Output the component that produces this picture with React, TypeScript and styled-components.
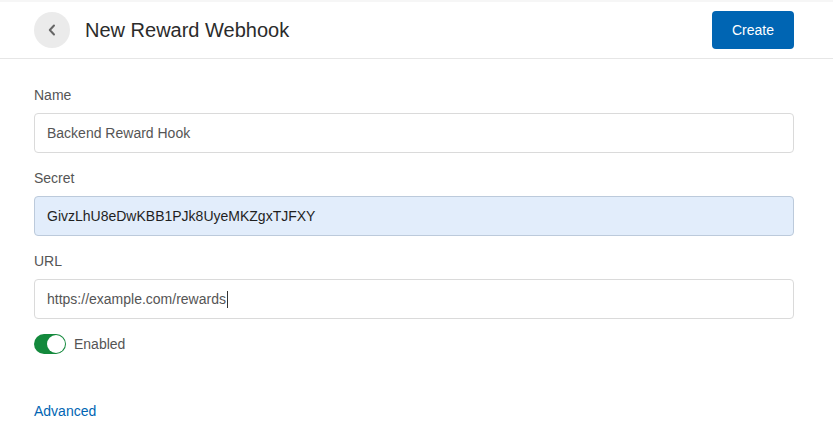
import React from "react";
import styled, { createGlobalStyle } from "styled-components";

const Global = createGlobalStyle`
  html, body { margin: 0; padding: 0; background: #fff; }
  body { font-family: "Liberation Sans", Arial, Helvetica, sans-serif; }
  * { box-sizing: border-box; }
`;

const Page = styled.div`
  width: 833px;
  min-height: 441px;
  background: #fff;
  border-top: 2px solid #f6f6f6;
`;

const Header = styled.header`
  height: 57px;
  display: flex;
  align-items: center;
  justify-content: space-between;
  padding: 0 39px 0 34px;
  border-bottom: 1px solid #e6e6e6;
`;

const TitleGroup = styled.div`
  display: flex;
  align-items: center;
  gap: 15px;
`;

const BackButton = styled.button`
  width: 36px;
  height: 36px;
  border-radius: 50%;
  border: none;
  background: #ebebeb;
  display: flex;
  align-items: center;
  justify-content: center;
  padding: 0;
`;

const Title = styled.h1`
  margin: 0;
  font-size: 20px;
  font-weight: 400;
  color: #2b2b2b;
`;

const PrimaryButton = styled.button`
  width: 82px;
  height: 38px;
  border: none;
  border-radius: 4px;
  background: #0065b3;
  color: #fff;
  font-family: inherit;
  font-size: 14px;
`;

const Form = styled.div`
  padding: 28px 39px 0 34px;
  display: flex;
  flex-direction: column;
`;

const Field = styled.div`
  display: flex;
  flex-direction: column;
  margin-bottom: 17px;
`;

const Label = styled.label`
  font-size: 14px;
  color: #555;
  line-height: 16px;
  margin-bottom: 10px;
`;

const Input = styled.div<{ $filled?: boolean }>`
  height: 40px;
  border-radius: 4px;
  border: 1px solid ${(p) => (p.$filled ? "#bccadb" : "#dadada")};
  background: ${(p) => (p.$filled ? "#e2edfb" : "#fff")};
  color: ${(p) => (p.$filled ? "#1f1f1f" : "#555")};
  font-size: 14px;
  display: flex;
  align-items: center;
  padding: 0 12px;
`;

const Caret = styled.span`
  display: inline-block;
  width: 1px;
  height: 17px;
  background: #333;
  margin-left: 1px;
`;

const ToggleRow = styled.div`
  display: flex;
  align-items: center;
  gap: 8px;
  margin-top: -2px;
`;

const Track = styled.span`
  width: 32px;
  height: 20px;
  border-radius: 10px;
  background: #13893c;
  position: relative;
  display: inline-block;
`;

const Knob = styled.span`
  position: absolute;
  right: 1px;
  top: 1px;
  width: 18px;
  height: 18px;
  border-radius: 50%;
  background: #fff;
`;

const ToggleLabel = styled.span`
  font-size: 14px;
  color: #555;
`;

const Link = styled.a`
  margin-top: 49px;
  font-size: 14px;
  color: #0065b3;
  text-decoration: none;
`;

export default function App() {
  return (
    <>
      <Global />
      <Page>
        <Header>
          <TitleGroup>
            <BackButton aria-label="Back">
              <svg width="10" height="12" viewBox="0 0 10 12">
                <path d="M7 1.5 L2.8 6 L7 10.5" fill="none" stroke="#666" strokeWidth="2" strokeLinecap="round" strokeLinejoin="round" />
              </svg>
            </BackButton>
            <Title>New Reward Webhook</Title>
          </TitleGroup>
          <PrimaryButton>Create</PrimaryButton>
        </Header>
        <Form>
          <Field>
            <Label>Name</Label>
            <Input>Backend Reward Hook</Input>
          </Field>
          <Field>
            <Label>Secret</Label>
            <Input $filled>GivzLhU8eDwKBB1PJk8UyeMKZgxTJFXY</Input>
          </Field>
          <Field>
            <Label>URL</Label>
            <Input>
              https://example.com/rewards<Caret />
            </Input>
          </Field>
          <ToggleRow>
            <Track>
              <Knob />
            </Track>
            <ToggleLabel>Enabled</ToggleLabel>
          </ToggleRow>
          <Link href="#">Advanced</Link>
        </Form>
      </Page>
    </>
  );
}
